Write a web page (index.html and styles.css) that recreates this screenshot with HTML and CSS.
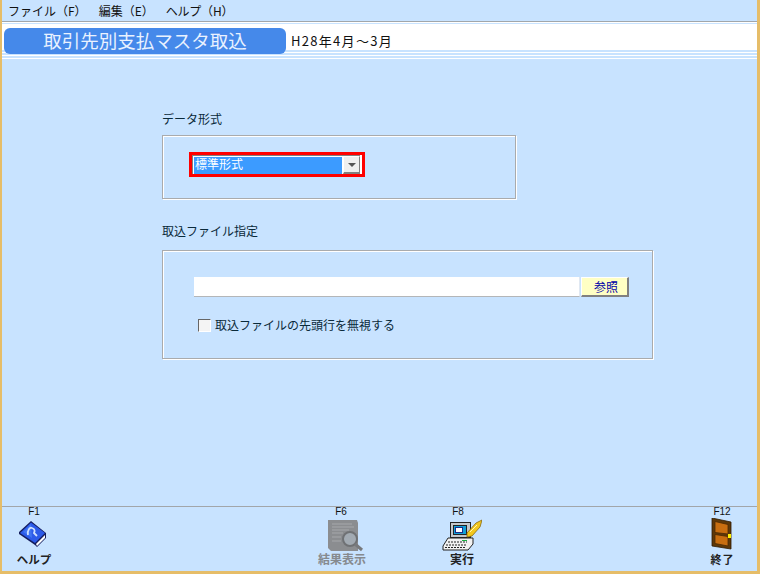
FILE: index.html
```html
<!DOCTYPE html>
<html lang="ja">
<head>
<meta charset="utf-8">
<title>取引先別支払マスタ取込</title>
<link rel="stylesheet" href="styles.css">
</head>
<body>
<div class="window">
  <nav class="menubar">
    <span class="menu-file">ファイル（F）</span>
    <span class="menu-edit">編集（E）</span>
    <span class="menu-help">ヘルプ（H）</span>
  </nav>
  <header class="titleband">
    <h1 class="title">取引先別支払マスタ取込</h1>
    <span class="period">H28年4月～3月</span>
  </header>
  <div class="stripes"></div>
  <main class="content">
    <section class="group group-format">
      <h2 class="group-label">データ形式</h2>
      <div class="panel panel-format">
        <div class="highlight">
          <div class="combo">
            <span class="combo-value">標準形式</span>
            <span class="combo-btn"><span class="arrow"></span></span>
          </div>
        </div>
      </div>
    </section>
    <section class="group group-file">
      <h2 class="group-label">取込ファイル指定</h2>
      <div class="panel panel-file">
        <div class="file-row">
          <div class="file-input"></div>
          <button class="browse" type="button">参照</button>
        </div>
        <label class="check-row"><span class="check"></span>取込ファイルの先頭行を無視する</label>
      </div>
    </section>
  </main>
  <footer class="fkeys">
    <div class="key">
      <span class="key-name">F1</span>
      <svg class="key-icon" width="32" height="34" viewBox="0 0 32 34">
        <path d="M13 3 L1 14 L1 16 L17 27 L19 29 L28 20 L28 15 Z" fill="#141c5c"/>
        <path d="M13 4.500 L2 15 L17 25 L27 15 Z" fill="#2c5ae8"/>
        <path d="M13 6 L5 14 L14 20 Z" fill="#3f74f2"/>
        <path d="M18 26 L27 17 L27 20 L19 28 Z" fill="#fff"/>
        <path d="M10 17 C9 12 12 9 14 10 C17 11 17 13 16 15 L19 18" fill="none" stroke="#cfe0ff" stroke-width="1.800"/>
      </svg>
      <span class="key-label key-help">ヘルプ</span>
    </div>
    <div class="key key-f6">
      <span class="key-name">F6</span>
      <svg class="key-icon" width="44" height="34" viewBox="0 0 44 34">
        <path d="M9 2 H38 L39 5 V33 H12 L9 30 Z" fill="#8b8d90"/>
        <path d="M13 6 H33 M13 9 H35 M13 12 H30 M13 15 H24 M13 19 H22 M13 23 H22" stroke="#a6a8ab" stroke-width="1"/>
        <circle cx="31" cy="21" r="7" fill="#a2aab2" stroke="#6f7174" stroke-width="2"/>
        <path d="M36 26 L43 32" stroke="#77797c" stroke-width="3"/>
      </svg>
      <span class="key-label key-disabled">結果表示</span>
    </div>
    <div class="key key-f8">
      <span class="key-name">F8</span>
      <svg class="key-icon" width="48" height="34" viewBox="0 0 48 34">
        <rect x="16.500" y="4.500" width="20" height="15" fill="#c4c8cc" stroke="#222"/>
        <rect x="19.500" y="7.500" width="13" height="9" fill="#12a0d8" stroke="#222"/>
        <rect x="21.500" y="9.500" width="7" height="5" fill="#fff" stroke="#1a2a8a"/>
        <path d="M14 20 H39 V26 L34 32 H9 V28 Z" fill="#f2f2f2" stroke="#222"/>
        <path d="M14 24 H33 M12 27 H32 M11 29.500 H31" stroke="#222" stroke-dasharray="2 1"/>
        <rect x="28" y="22" width="5" height="1" fill="#18b040"/>
        <path d="M33 15 L42 5 L48 2 L46 9 L38 18 L33 19 Z" fill="#f2c81e" stroke="#8a6a10" stroke-width="0.800"/>
        <path d="M36 14 L43 7" stroke="#fff6b0"/>
      </svg>
      <span class="key-label key-run">実行</span>
    </div>
    <div class="key key-f12">
      <span class="key-name">F12</span>
      <svg class="key-icon" width="22" height="34" viewBox="0 0 22 34">
        <path d="M1 0 L20 4 V31 L1 28 Z" fill="#5e3808" stroke="#2e1a02" stroke-width="0.800"/>
        <path d="M4 3.500 L17 6.500 V16 L4 14.500 Z M4 16.500 L17 18.500 V28 L4 25.500 Z" fill="#c86e10" stroke="#4a2a05" stroke-width="0.800"/>
        <rect x="17" y="16" width="3" height="4" fill="#fff200"/>
      </svg>
      <span class="key-label key-end">終了</span>
    </div>
  </footer>
</div>
</body>
</html>
```
FILE: styles.css
```css
* { box-sizing: border-box; }
html, body { margin: 0; padding: 0; }
body {
  width: 760px;
  height: 574px;
  overflow: hidden;
  font-family: "Noto Sans CJK JP", "Liberation Sans", sans-serif;
  font-size: 12px;
  color: #0a2a3a;
}
.window {
  width: 760px;
  height: 574px;
  display: flex;
  flex-direction: column;
  background: #c8e3ff;
  border-left: 2px solid #e6bd68;
  border-right: 3px solid #e6bd68;
  border-bottom: 3px solid #e6bd68;
}
.menubar {
  height: 22px;
  flex: none;
  display: flex;
  align-items: center;
  padding: 1px 0 0 6px;
  border-bottom: 1px solid #a2a6aa;
  box-shadow: 0 1px 0 #fff;
  color: #111;
  line-height: 20px;
}
.menu-edit { margin-left: 12px; }
.menu-help { margin-left: 12px; letter-spacing: -0.2px; }
.titleband {
  flex: none;
  margin-top: 2px;
  height: 26px;
  background: #fff;
  display: flex;
  align-items: flex-start;
}
.title {
  position: relative;
  margin: 4px 0 0 2px;
  width: 282px;
  height: 26px;
  flex: none;
  border-radius: 6px;
  background: #4589ea;
  color: #e9f2ff;
  font-size: 18.500px;
  font-weight: 400;
  line-height: 25px;
  text-align: center;
}
.period {
  margin: 8px 0 0 5px;
  font-size: 13px;
  line-height: 18px;
  letter-spacing: 1.3px;
  color: #111;
}
.stripes {
  flex: none;
  height: 7px;
  margin-top: 2px;
  background: repeating-linear-gradient(to bottom, #fff 0, #fff 1px, #c8e3ff 1px, #c8e3ff 3px);
}
.content {
  flex: 1;
  padding: 51px 0 0 160px;
}
.group-label {
  margin: 0;
  font-size: 12px;
  font-weight: 400;
  line-height: 18px;
  height: 25px;
  color: #0a2a3a;
}
.group-file { margin-top: 23px; }
.group-file .group-label { height: 28px; }
.panel {
  border: 1px solid #a9abad;
  box-shadow: inset 1px 1px 0 #fff, 1px 1px 0 #fff;
}
.panel-format {
  width: 354px;
  height: 64px;
  padding: 16px 0 0 26px;
}
.highlight {
  width: 176px;
  height: 25px;
  border: 3px solid #f00;
  background: #fff;
  padding: 0 2px 0 0;
}
.combo {
  height: 19px;
  display: flex;
  border-top: 1px solid #808080;
  border-left: 1px solid #808080;
  background: #fff;
  padding: 1px 0 0 1px;
}
.combo-value {
  width: 148px;
  height: 17px;
  background: #3c9bff;
  color: #fff;
  line-height: 13px;
  padding-left: 1px;
}
.combo-btn {
  width: 17px;
  height: 18px;
  margin-top: -1px;
  margin-left: 1px;
  background: #efefef;
  border-top: 1px solid #fff;
  border-left: 1px solid #fff;
  border-right: 1px solid #808080;
  border-bottom: 2px solid #808080;
  display: flex;
  align-items: center;
  justify-content: center;
}
.arrow {
  width: 0;
  height: 0;
  border-left: 4px solid transparent;
  border-right: 4px solid transparent;
  border-top: 4px solid #555;
}
.panel-file {
  width: 491px;
  height: 109px;
  padding: 26px 0 0 31px;
}
.file-row {
  display: flex;
  height: 20px;
}
.file-input {
  width: 386px;
  height: 20px;
  background: #fff;
  border-bottom: 1px solid #b4b6b8;
  border-right: 1px solid #e0e8f2;
}
.browse {
  width: 48px;
  height: 20px;
  margin: 0 0 0 1px;
  padding: 0 0 0 3px;
  font: inherit;
  color: #0000a8;
  background: #ffffc4;
  border: 0;
  border-top: 1px solid #fff;
  border-left: 1px solid #fff;
  border-right: 2px solid #808080;
  border-bottom: 2px solid #808080;
}
.check-row {
  display: flex;
  align-items: center;
  margin: 19px 0 0 4px;
  color: #0a2a3a;
  line-height: 18px;
}
.check {
  width: 13px;
  height: 13px;
  margin-right: 4px;
  background: #f4f4f4;
  border-top: 1px solid #666;
  border-left: 1px solid #666;
  border-right: 1px solid #fff;
  border-bottom: 1px solid #fff;
}
.fkeys {
  flex: none;
  height: 65px;
  border-top: 1px solid #a2a6aa;
  display: flex;
  padding-left: 2px;
}
.key {
  width: 60px;
  display: flex;
  flex-direction: column;
  align-items: center;
}
.key-name {
  height: 11px;
  font-family: "Liberation Sans", sans-serif;
  font-size: 10px;
  line-height: 9px;
  color: #111;
}
.key-icon { flex: none; height: 34px; }
.key-label {
  font-size: 12px;
  font-weight: 700;
  line-height: 14px;
  color: #222;
}
.key-help { font-size: 11.500px; }
.key-disabled { color: #868a8e; padding-left: 2px; }
.key-run { padding-left: 8px; }
.key-end { font-size: 11px; letter-spacing: 1px; padding-left: 1px; }
.key-f6 { margin-left: 247px; }
.key-f8 { margin-left: 57px; }
.key-f12 { margin-left: 204px; }
```
